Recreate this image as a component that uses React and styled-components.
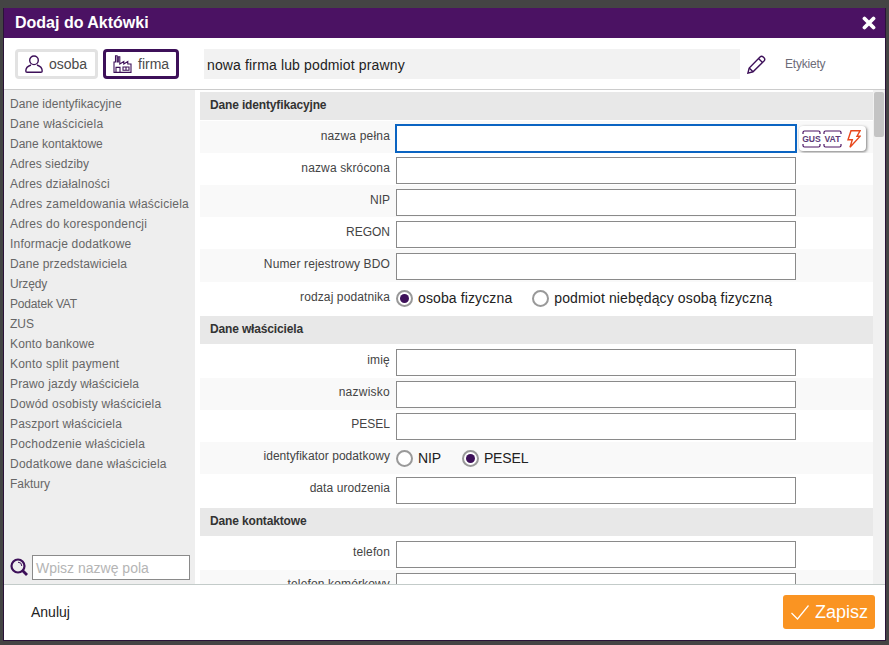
import React from "react";
import styled, { createGlobalStyle } from "styled-components";

const Global = createGlobalStyle`
  html, body { margin: 0; padding: 0; height: 645px; overflow: hidden; background: #444; }
  body { font-family: "Liberation Sans", Arial, sans-serif; }
`;
const Dialog = styled.div`
  position: absolute; left: 3px; top: 8px; width: 881px; height: 632px;
  background: #fff; border: 1px solid #2a1238; border-top: 0; overflow: hidden;
`;
const Header = styled.div`
  height: 30px; margin: 0 -1px; background: #4b1263; color: #fff; display: flex; align-items: center;
  justify-content: space-between; padding: 0 10px 0 12px; font-size: 16px; font-weight: bold;
`;
const Close = styled.svg`width: 14px; height: 14px; display: block;`;
const TopBar = styled.div`
  height: 51px; border-bottom: 1px solid #ccc; position: relative;
`;
const TypeButton = styled.div`
  position: absolute; left: ${p => p.$left}px; top: 11px; width: ${p => p.$width}px; height: 30px; box-sizing: border-box;
  border: 3px solid ${p => p.$active ? "#3d1059" : "#e2e2e2"}; border-radius: 4px; display: flex; align-items: center;
  gap: 6px; padding-left: 7px; font-size: 14px; color: #4a4a4a;
`;
const NameBox = styled.div`
  position: absolute; left: 200px; top: 11px; width: 536px; height: 30px; background: #f2f2f2;
  font-size: 14px; color: #222; line-height: 32px; padding-left: 3px; box-sizing: border-box; letter-spacing: 0.14px;
`;
const Pencil = styled.svg`position: absolute; left: 743px; top: 17px; width: 19px; height: 19px;`;
const Tags = styled.div`position: absolute; left: 781px; top: 19px; font-size: 12px; color: #6c6c78; letter-spacing: -0.2px;`;
const Body = styled.div`position: relative; height: 494px; overflow: hidden;`;
const Sidebar = styled.div`
  position: absolute; left: 0; top: 0; width: 191px; height: 494px; background: #eee;
`;
const SideItem = styled.div`
  height: 20px; line-height: 20px; padding-left: 6px; font-size: 12px; color: #666; white-space: nowrap;
  letter-spacing: ${p => p.$ls}px;
`;
const SideList = styled.div`padding-top: 4px;`;
const SearchIcon = styled.svg`position: absolute; left: 6px; top: 468px; width: 18px; height: 18px;`;
const SearchInput = styled.div`
  position: absolute; left: 28px; top: 465px; width: 158px; height: 25px; box-sizing: border-box;
  border: 1px solid #8a8a8a; background: #fff; color: #b5b5b5; font-size: 14px; line-height: 24px; padding-left: 3px;
`;
const Content = styled.div`position: absolute; left: 196px; top: 0; width: 673px; height: 494px; overflow: hidden; padding-top: 2px; box-sizing: border-box;`;
const Section = styled.div`
  height: 28px; background: #e8e8e8; font-size: 12px; font-weight: bold; color: #333; line-height: 27px; padding-left: 10px;
  letter-spacing: -0.15px; margin-bottom: ${p => p.$gap || 0}px;
`;
const Row = styled.div`
  position: relative; height: ${p => p.$h || 32}px; background: ${p => p.$alt ? "#f9f9f9" : "#fff"};
`;
const Label = styled.div`
  position: absolute; right: 483px; top: ${p => p.$top}px; font-size: 12px; color: #444; white-space: nowrap; line-height: 14px;
  letter-spacing: ${p => p.$ls ?? 0.14}px;
`;
const Field = styled.div`
  position: absolute; left: ${p => p.$focus ? 195 : 196}px; top: ${p => p.$top}px; width: ${p => p.$focus ? 402 : 400}px;
  height: ${p => p.$focus ? 29 : 27}px; box-sizing: border-box;
  border: ${p => p.$focus ? "2px solid #0a64c2" : "1px solid #8a8a8a"}; background: #fff;
`;
const Radios = styled.div`
  position: absolute; left: 196px; top: 0; height: ${p => p.$h}px; display: flex; align-items: center; font-size: 14px; color: #222;
  letter-spacing: ${p => p.$ls}px;
`;
const RadioDot = styled.span`
  width: 17px; height: 17px; box-sizing: border-box; border-radius: 50%; border: 2px solid #999; background: #fff;
  display: inline-flex; align-items: center; justify-content: center; margin-right: 5px; margin-left: ${p => p.$ml || 0}px;
  &::after { content: ""; width: 9px; height: 9px; border-radius: 50%; background: ${p => p.$on ? "#3d1059" : "transparent"}; }
`;
const Gus = styled.div`
  position: absolute; left: 599px; top: 5px; width: 67px; height: 25px; box-sizing: border-box; background: #fff; border-radius: 4px;
  box-shadow: 1px 1px 3px rgba(0,0,0,.5); display: flex; align-items: center; padding-left: 3px; gap: 2px;
`;
const Bolt = styled.svg`width: 14px; height: 18px; display: block; margin-left: 3px;`;
const Scrollbar = styled.div`
  position: absolute; left: 869px; top: 0; width: 12px; height: 494px; background: #f1f1f1;
  &::after { content: ""; position: absolute; left: 1px; top: 2px; width: 10px; height: 45px; background: #c4c4c4; border-radius: 2px; }
`;
const Footer = styled.div`height: 56px; border-top: 1px solid #c3cbc9; position: relative; box-sizing: border-box;`;
const Cancel = styled.div`position: absolute; left: 27px; top: 19px; font-size: 14px; color: #222;`;
const Save = styled.div`
  position: absolute; left: 779px; top: 10px; width: 92px; height: 34px; background: #fa9422; border-radius: 3px; color: #fff;
  font-size: 18px; display: flex; align-items: center; padding-left: 8px; gap: 6px; box-sizing: border-box;
`;
const Tag = styled.svg`width: 19px; height: 18px; display: block; flex: none; overflow: visible;`;

const items = [
  ["Dane identyfikacyjne", 0.05], ["Dane właściciela", 0.25], ["Dane kontaktowe", 0], ["Adres siedziby", 0.07],
  ["Adres działalności", 0.17], ["Adres zameldowania właściciela", 0.23], ["Adres do korespondencji", 0.22],
  ["Informacje dodatkowe", 0.2], ["Dane przedstawiciela", 0.15], ["Urzędy", -0.15], ["Podatek VAT", -0.18], ["ZUS", 0],
  ["Konto bankowe", 0.15], ["Konto split payment", 0.21], ["Prawo jazdy właściciela", 0.13],
  ["Dowód osobisty właściciela", 0.23], ["Paszport właściciela", 0.2], ["Pochodzenie właściciela", 0.22],
  ["Dodatkowe dane właściciela", 0.23], ["Faktury", 0],
];

const TagIcon = ({ t }) => (
  <Tag viewBox="0 0 19 18">
    <path d="M1 4V2.5A1.5 1.5 0 0 1 2.5 1h14A1.5 1.5 0 0 1 18 2.5V4M1 14v1.5A1.5 1.5 0 0 0 2.5 17h14a1.5 1.5 0 0 0 1.5-1.5V14" fill="none" stroke="#4b1263" strokeWidth="1.2"/>
    <text x="9.5" y="12.3" textAnchor="middle" fontSize="8.6" fontWeight="bold" fill="#5b3a78" fontFamily="Liberation Sans">{t}</text>
  </Tag>
);

const FieldRow = ({ label, alt, focus, h, fieldTop = 4, labelTop = 8, ls, children }) => (
  <Row $alt={alt} $h={h}>
    <Label $top={labelTop} $ls={ls}>{label}</Label>
    <Field $top={fieldTop} $focus={focus} />
    {children}
  </Row>
);

export default function App() {
  return (
    <>
      <Global />
      <Dialog>
        <Header>
          Dodaj do Aktówki
          <Close viewBox="0 0 14 14"><path d="M2.5 2.5l9 9M11.5 2.5l-9 9" stroke="#fff" strokeWidth="3.8" strokeLinecap="round"/></Close>
        </Header>
        <TopBar>
          <TypeButton $left={11} $width={83}>
            <svg width="18" height="18" viewBox="0 0 18 18" fill="none" stroke="#3d1059" strokeWidth="1.4">
              <circle cx="9" cy="5.3" r="4.3"/>
              <path d="M6 10C3 11 .8 13.5 .8 16c0 .8.5 1.3 1.3 1.3h13.800c.8 0 1.3-.5 1.3-1.3 0-2.500-2.200-5-5.200-6"/>
            </svg>
            osoba
          </TypeButton>
          <TypeButton $left={99} $width={76} $active>
            <svg width="19" height="18" viewBox="0 0 19 18" fill="none" stroke="#3d1059" strokeWidth="1.1">
              <path d="M1 17.4V7h1.500V.8h1.600V7h1.200V1.800h1.500V9l4-2.500V9l4-2.500V9H18v8.400z"/>
              <path d="M3 17.4v-5h4v5M10 12h6v3.200h-6zM13 12v3.200"/>
            </svg>
            firma
          </TypeButton>
          <NameBox>nowa firma lub podmiot prawny</NameBox>
          <Pencil viewBox="0 0 19 19" fill="none" stroke="#3d1059" strokeWidth="1.4">
            <path d="M.9 18.100l1.300-5L13 2a2.300 2.300 0 0 1 3.200 0l.8.800a2.300 2.300 0 0 1 0 3.200L6 16.800z"/>
            <path d="M2.200 13.100l3.800 3.700M11.500 3.500l4 4"/>
          </Pencil>
          <Tags>Etykiety</Tags>
        </TopBar>
        <Body>
          <Sidebar>
            <SideList>{items.map(([t, ls]) => <SideItem key={t} $ls={ls}>{t}</SideItem>)}</SideList>
            <SearchIcon viewBox="0 0 18 18" fill="none" stroke="#3d1059">
              <circle cx="8" cy="8" r="6.5" strokeWidth="2.2"/>
              <path d="M12.500 12.500l4.500 4.500" strokeWidth="2.8"/>
              <path d="M8 4.200a3.800 3.800 0 0 1 3.800 3.800" strokeWidth="1"/>
            </SearchIcon>
            <SearchInput>Wpisz nazwę pola</SearchInput>
          </Sidebar>
          <Content>
            <Section $gap={1}>Dane identyfikacyjne</Section>
            <FieldRow label="nazwa pełna" focus alt fieldTop={3} ls={0.18}>
              <Gus>
                <TagIcon t="GUS" /><TagIcon t="VAT" />
                <Bolt viewBox="0 0 14 18" fill="none" stroke="#e8481c" strokeWidth="1.4">
                  <path d="M4 .8h9l-3 5.400h3.200L3 17.200l2.300-7.400H1z"/>
                </Bolt>
              </Gus>
            </FieldRow>
            <FieldRow label="nazwa skrócona" />
            <FieldRow label="NIP" alt ls={0} />
            <FieldRow label="REGON" ls={0} />
            <FieldRow label="Numer rejestrowy BDO" alt h={33} />
            <Row $h={34}>
              <Label $top={8} $ls={0.12}>rodzaj podatnika</Label>
              <Radios $h={32} $ls={0.12}><RadioDot $on />osoba fizyczna<RadioDot $ml={20} />podmiot niebędący osobą fizyczną</Radios>
            </Row>
            <Section $gap={1}>Dane właściciela</Section>
            <FieldRow label="imię" h={33} ls={0.2} />
            <FieldRow label="nazwisko" alt fieldTop={3} labelTop={7} ls={0.25} />
            <FieldRow label="PESEL" fieldTop={3} labelTop={7} ls={0} />
            <Row $alt>
              <Label $top={7} $ls={0.05}>identyfikator podatkowy</Label>
              <Radios $h={32} $ls={-0.15}><RadioDot />NIP<RadioDot $on $ml={21} />PESEL</Radios>
            </Row>
            <FieldRow label="data urodzenia" h={34} fieldTop={3} labelTop={7} ls={0.07} />
            <Section>Dane kontaktowe</Section>
            <FieldRow label="telefon" h={34} fieldTop={5} labelTop={9} />
            <FieldRow label="telefon komórkowy" alt fieldTop={3} labelTop={7} />
          </Content>
          <Scrollbar />
        </Body>
        <Footer>
          <Cancel>Anuluj</Cancel>
          <Save>
            <svg width="18" height="15" viewBox="0 0 18 15" fill="none" stroke="#fff" strokeWidth="1.2"><path d="M.5 8l6 6L17.5 .5"/></svg>
            Zapisz
          </Save>
        </Footer>
      </Dialog>
    </>
  );
}
